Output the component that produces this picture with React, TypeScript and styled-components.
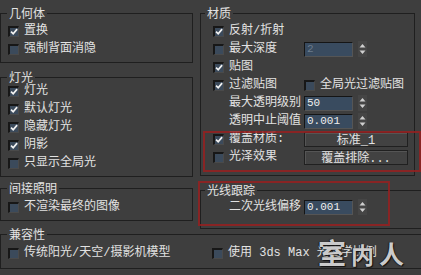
import styled, { createGlobalStyle } from "styled-components";

const GlobalStyle = createGlobalStyle`
  html, body {
    margin: 0;
    padding: 0;
    background: #3e3e3e;
  }
  body {
    font-family: "Liberation Mono", "Noto Sans CJK SC", monospace;
    font-size: 12px;
    color: #e2e2e2;
  }
`;

const CheckBox = ({ on }: { on?: boolean }) => (
  <Box>
    {on && (
      <svg width="9" height="9" viewBox="0 0 9 9">
        <path d="M1.2 4.6 L3.6 7 L8 1.8" fill="none" stroke="#f2f2f2" strokeWidth="1.9" />
      </svg>
    )}
  </Box>
);

const Spinner = () => (
  <SpinBox>
    <svg width="9" height="16" viewBox="0 0 9 16">
      <polygon points="1.5,6.5 4.5,3 7.5,6.5" fill="#cfcfcf" />
      <polygon points="1.5,9.5 4.5,13 7.5,9.5" fill="#cfcfcf" />
    </svg>
  </SpinBox>
);

export default function App() {
  return (
    <Panel>
      <GlobalStyle />
      <Columns>
        <Column>
          <Group $inset={7} $top={8} $pt={4} $pb={4}>
            <Title $shift={-1}>几何体</Title>
            <Row><CheckBox on /><Label>置换</Label></Row>
            <Row><CheckBox /><Label>强制背面消隐</Label></Row>
          </Group>
          <Group $inset={7} $top={9} $pt={0} $pb={4}>
            <Title $shift={-1}>灯光</Title>
            <Row><CheckBox on /><Label>灯光</Label></Row>
            <Row><CheckBox on /><Label>默认灯光</Label></Row>
            <Row><CheckBox on /><Label>隐藏灯光</Label></Row>
            <Row><CheckBox on /><Label>阴影</Label></Row>
            <Row><CheckBox /><Label>只显示全局光</Label></Row>
          </Group>
          <Group $inset={7} $top={6} $pt={5} $pb={4}>
            <Title $shift={-1}>间接照明</Title>
            <Row><CheckBox /><Label>不渲染最终的图像</Label></Row>
          </Group>
        </Column>

        <Column>
          <Group $inset={12} $top={8} $pt={4} $pb={9} $right={6}>
            <Title $shift={-8}>材质</Title>
            <Row><CheckBox on /><Label>反射/折射</Label></Row>
            <Row>
              <CheckBox /><Label $w={70}>最大深度</Label>
              <NumField $dim>2</NumField><Spinner />
            </Row>
            <Row><CheckBox on /><Label>贴图</Label></Row>
            <Row>
              <CheckBox on /><Label $w={70}>过滤贴图</Label>
              <CheckBox /><Label>全局光过滤贴图</Label>
            </Row>
            <Row>
              <Slot /><Label $w={70}>最大透明级别</Label>
              <NumField>50</NumField><Spinner />
            </Row>
            <Row>
              <Slot /><Label $w={70}>透明中止阈值</Label>
              <NumField>0.001</NumField><Spinner />
            </Row>
            <Row>
              <CheckBox on /><Label $w={70}>覆盖材质:</Label>
              <Button>标准_1</Button>
            </Row>
            <Row>
              <CheckBox /><Label $w={70}>光泽效果</Label>
              <Button>覆盖排除...</Button>
            </Row>
          </Group>
          <Group $inset={12} $top={9} $pt={3} $pb={12} $right={-2}>
            <Title $shift={-8}>光线跟踪</Title>
            <Row>
              <Slot /><Label $w={70}>二次光线偏移</Label>
              <NumField>0.001</NumField><Spinner />
            </Row>
          </Group>
        </Column>
      </Columns>

      <Group $inset={7} $top={0} $pt={5} $pb={6} $right={-2}>
        <Title $shift={-1}>兼容性</Title>
        <CompatGrid>
          <Row><CheckBox /><Label>传统阳光/天空/摄影机模型</Label></Row>
          <Row><CheckBox /><Label>使用 3ds Max 光度学比例</Label></Row>
        </CompatGrid>
      </Group>

      {/* red annotation frames drawn over the dialog */}
      <Mark $x={203} $y={131} $w={218} $h={41} />
      <Mark $x={198} $y={181} $w={192} $h={45} />
      <Watermark>
        <Glyph $size={28}>室</Glyph>
        <Glyph $size={23}>内</Glyph>
        <Glyph $size={25}>人</Glyph>
      </Watermark>
    </Panel>
  );
}

const Panel = styled.div`
  position: relative;
  width: 421px;
  height: 275px;
  overflow: hidden;
  background: #3e3e3e;
`;

const Columns = styled.div`
  display: grid;
  grid-template-columns: 193px 1fr;
  column-gap: 7px;
  align-items: start;
`;

const Column = styled.div`
  display: flex;
  flex-direction: column;
`;

const Group = styled.fieldset<{ $inset: number; $top: number; $pt: number; $pb: number; $right?: number }>`
  margin: ${(p) => p.$top}px ${(p) => p.$right ?? 0}px 0 0;
  padding: ${(p) => p.$pt}px 0 ${(p) => p.$pb}px ${(p) => p.$inset}px;
  border: 1px solid #1f1f1f;
  min-width: 0;
`;

const Title = styled.legend<{ $shift: number }>`
  margin-left: ${(p) => p.$shift}px;
  padding: 0 2px;
  height: 10px;
  line-height: 10px;
  font-family: "Noto Sans CJK SC", sans-serif;
  white-space: nowrap;
`;

const Row = styled.div`
  display: flex;
  align-items: center;
  column-gap: 5px;
  height: 18px;
`;

const Label = styled.span<{ $w?: number }>`
  flex: none;
  width: ${(p) => (p.$w ? `${p.$w}px` : "auto")};
  white-space: nowrap;
  line-height: 18px;
`;

const Box = styled.span`
  flex: none;
  box-sizing: border-box;
  width: 11px;
  height: 11px;
  display: flex;
  align-items: center;
  justify-content: center;
  background: #3b4a5b;
  border-top: 2px solid #171717;
  border-left: 2px solid #171717;
  border-right: 1px solid #4a4a4a;
  border-bottom: 1px solid #4a4a4a;
`;

const Slot = styled.span`
  flex: none;
  width: 11px;
`;

const NumField = styled.span<{ $dim?: boolean }>`
  flex: none;
  box-sizing: border-box;
  width: 49px;
  height: 15px;
  padding-left: 2px;
  font-size: 11px;
  line-height: 13px;
  color: ${(p) => (p.$dim ? "#6c7c8c" : "#eeeeee")};
  background: #394b5f;
  border-top: 1px solid #151515;
  border-left: 1px solid #151515;
  border-right: 1px solid #555;
  border-bottom: 1px solid #555;
`;

const SpinBox = styled.span`
  flex: none;
  display: flex;
  width: 9px;
  height: 16px;
  background: #454545;
`;

const Button = styled.span`
  flex: none;
  box-sizing: border-box;
  width: 104px;
  height: 15px;
  display: flex;
  align-items: center;
  justify-content: center;
  background: #424242;
  border: 1px solid #202020;
  box-shadow: inset 1px 1px 0 #555;
  white-space: nowrap;
`;

const CompatGrid = styled.div`
  display: grid;
  grid-template-columns: 204px 1fr;
`;

const Mark = styled.div<{ $x: number; $y: number; $w: number; $h: number }>`
  position: absolute;
  left: ${(p) => p.$x}px;
  top: ${(p) => p.$y}px;
  width: ${(p) => p.$w}px;
  height: ${(p) => p.$h}px;
  box-sizing: border-box;
  border: 2px solid rgba(150, 32, 32, 0.85);
  pointer-events: none;
`;

const Watermark = styled.div`
  position: absolute;
  left: 318px;
  top: 234px;
  display: flex;
  align-items: flex-end;
  column-gap: 5px;
  height: 34px;
  font-family: "Noto Sans CJK SC", sans-serif;
  font-weight: 700;
  color: rgba(222, 222, 222, 0.92);
  text-shadow: 1px 1px 1px #111, -1px 0 1px #222;
  pointer-events: none;
`;

const Glyph = styled.span<{ $size: number }>`
  font-size: ${(p) => p.$size}px;
  line-height: ${(p) => p.$size + 4}px;
`;
